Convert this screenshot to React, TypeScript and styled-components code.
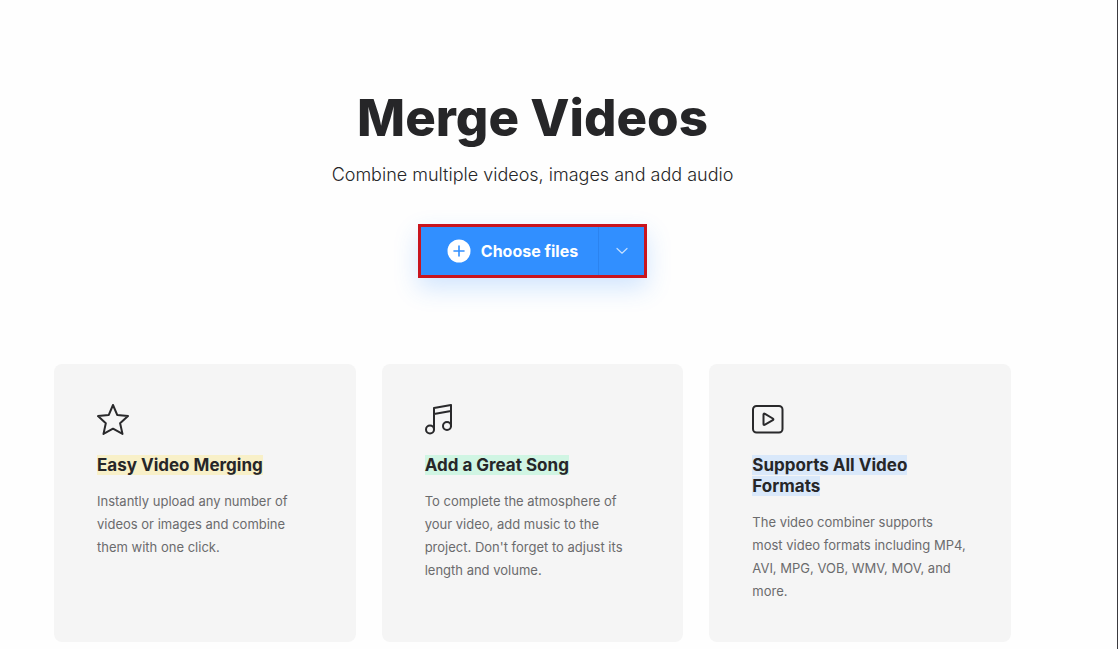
import React from "react";
import styled, { createGlobalStyle } from "styled-components";

const GlobalStyle = createGlobalStyle`
  *, *::before, *::after { box-sizing: border-box; }
  body {
    margin: 0;
    background: #fefefe;
    color: #262628;
    font-family: Inter, "Liberation Sans", sans-serif;
  }
`;

const Page = styled.main`
  min-height: 100vh;
  padding: 87px 106px 6px 54px;
  border-right: 1px solid #3b3b3f;
`;

const Hero = styled.header`
  display: flex;
  flex-direction: column;
  align-items: center;
  text-align: center;
`;

const Title = styled.h1`
  margin: 0;
  font-size: 51px;
  line-height: 62px;
  font-weight: 800;
`;

const Subtitle = styled.p`
  margin: 14px 0 0;
  font-size: 18px;
  line-height: 24px;
  font-weight: 300;
`;

const UploadGroup = styled.div`
  display: flex;
  margin-top: 37px;
  height: 54px;
  border: 3px solid #c9151e;
  background: #318fff;
  box-shadow: 0 10px 24px rgba(49, 143, 255, 0.22);
`;

const UploadButton = styled.button`
  display: flex;
  align-items: center;
  gap: 10px;
  padding: 0 20px 0 26px;
  border: 0;
  background: transparent;
  color: #fff;
  font: 700 16px/20px Inter, "Liberation Sans", sans-serif;
  cursor: pointer;
`;

const SourceButton = styled.button`
  display: flex;
  align-items: center;
  justify-content: center;
  width: 46px;
  padding: 0;
  border: 0;
  border-left: 1px solid #2b83ef;
  background: transparent;
  color: #c4dfff;
  cursor: pointer;
`;

const Features = styled.section`
  display: grid;
  grid-template-columns: repeat(3, minmax(0, 1fr));
  gap: 26px;
  margin-top: 86px;
`;

const Card = styled.article`
  padding: 40px 45px 39px 43px;
  border-radius: 8px;
  background: #f5f5f5;
`;

const CardIcon = styled.svg`
  display: block;
  width: 32px;
  height: 32px;
  fill: none;
  stroke: #29292b;
  stroke-width: 2;
  stroke-linecap: round;
  stroke-linejoin: round;
`;

const CardTitle = styled.h2`
  margin: 19px 0 0;
  font-size: 17px;
  line-height: 21px;
  font-weight: 700;
`;

const Highlight = styled.span<{ $tint: string }>`
  background: ${({ $tint }) => $tint};
`;

const CardText = styled.p`
  margin: 14px 0 0;
  color: #6b6b6d;
  font-size: 13px;
  line-height: 23px;
`;

const features = [
  {
    title: "Easy Video Merging",
    text: "Instantly upload any number of videos or images and combine them with one click.",
    tint: "#f8f0c8",
    icon: <path d="M16 1 20.2 10.9 31 12.1 23.1 19.2 25.5 29.9 16 24.7 6.5 29.9 8.8 19.2 1 12.1 11.8 10.9Z" />,
  },
  {
    title: "Add a Great Song",
    text: "To complete the atmosphere of your video, add music to the project. Don't forget to adjust its length and volume.",
    tint: "#d0f5e3",
    icon: (
      <>
        <circle cx="5" cy="25.5" r="4" />
        <circle cx="22" cy="22" r="4" />
        <path d="M9 25.5V4L26 1V22M9 10 26 7" />
      </>
    ),
  },
  {
    title: "Supports All Video Formats",
    text: "The video combiner supports most video formats including MP4, AVI, MPG, VOB, WMV, MOV, and more.",
    tint: "#d9e8fa",
    icon: (
      <>
        <rect x="1" y="2" width="29.5" height="26.5" rx="3.5" />
        <path d="M11.5 10.5V20Q11.5 21.5 13 20.7L20.8 16.2Q22 15.3 20.8 14.5L13 9.9Q11.5 9.1 11.5 10.5Z" />
      </>
    ),
  },
];

export default function App() {
  return (
    <>
      <GlobalStyle />
      <Page>
        <Hero>
          <Title>Merge Videos</Title>
          <Subtitle>Combine multiple videos, images and add audio</Subtitle>
          <UploadGroup>
            <UploadButton type="button">
              <svg width="24" height="24" viewBox="0 0 24 24" aria-hidden="true">
                <circle cx="12" cy="12" r="11.5" fill="#fff" />
                <path d="M12 7v10M7 12h10" stroke="#318fff" strokeWidth="1.6" strokeLinecap="round" />
              </svg>
              Choose files
            </UploadButton>
            <SourceButton type="button" aria-label="More upload sources">
              <svg width="12" height="8" viewBox="0 0 12 8" fill="none" aria-hidden="true">
                <path d="M1 1.5 6 6.2 11 1.5" stroke="currentColor" strokeWidth="1.2" strokeLinecap="round" strokeLinejoin="round" />
              </svg>
            </SourceButton>
          </UploadGroup>
        </Hero>
        <Features>
          {features.map(({ title, text, tint, icon }) => (
            <Card key={title}>
              <CardIcon viewBox="0 0 32 32" aria-hidden="true">{icon}</CardIcon>
              <CardTitle>
                <Highlight $tint={tint}>{title}</Highlight>
              </CardTitle>
              <CardText>{text}</CardText>
            </Card>
          ))}
        </Features>
      </Page>
    </>
  );
}
